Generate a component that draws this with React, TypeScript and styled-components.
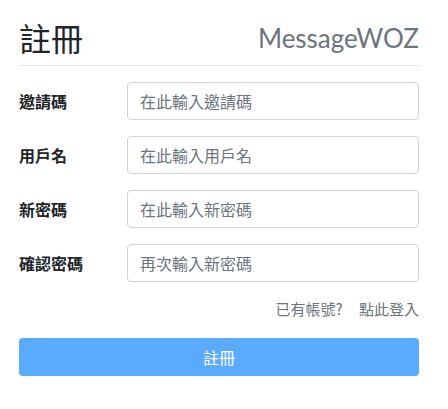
import React from "react";
import styled, { createGlobalStyle } from "styled-components";

const Global = createGlobalStyle`
  html, body { margin: 0; padding: 0; background: #fff; }
  body {
    font-family: Lato, "Noto Sans CJK TC", sans-serif;
    color: #212529;
  }
  * { box-sizing: border-box; }
`;

const Page = styled.div`
  width: 448px;
  padding: 10px 29px 0 19px;
`;

const Header = styled.div`
  display: flex;
  justify-content: space-between;
  align-items: center;
  height: 56px;
  border-bottom: 1px solid #e3e5e8;
  margin-bottom: 16px;
`;

const Title = styled.h1`
  margin: 0;
  font-size: 32px;
  font-weight: 400;
  line-height: 1.2;
  font-family: "Noto Sans CJK TC", sans-serif;
`;

const Brand = styled.div`
  font-family: Lato, sans-serif;
  font-size: 26px;
  color: #6c757d;
`;

const Form = styled.form`
  display: flex;
  flex-direction: column;
  gap: 16px;
`;

const Row = styled.div`
  display: grid;
  grid-template-columns: 108px 1fr;
  align-items: center;
`;

const Label = styled.label`
  font-size: 16px;
  font-weight: 700;
  font-family: "Noto Sans CJK TC", sans-serif;
`;

const Input = styled.input`
  height: 38px;
  width: 100%;
  border: 1px solid #ced4da;
  border-radius: 4px;
  padding: 0 12px;
  font-size: 16px;
  font-family: Lato, "Noto Sans CJK TC", sans-serif;
  color: #495057;
  &::placeholder { color: #6c757d; opacity: 1; }
`;

const LinkRow = styled.div`
  text-align: right;
  font-size: 15px;
  line-height: 22px;
  word-spacing: 13px;
  color: #6c757d;
  font-family: "Noto Sans CJK TC", sans-serif;
`;

const Button = styled.button`
  height: 38px;
  width: 100%;
  border: none;
  border-radius: 4px;
  background: #5aabff;
  color: #fff;
  font-size: 16px;
  font-family: "Noto Sans CJK TC", sans-serif;
  margin-top: 2px;
`;

const fields = [
  { label: "邀請碼", placeholder: "在此輸入邀請碼", type: "text" },
  { label: "用戶名", placeholder: "在此輸入用戶名", type: "text" },
  { label: "新密碼", placeholder: "在此輸入新密碼", type: "password" },
  { label: "確認密碼", placeholder: "再次輸入新密碼", type: "password" },
];

export default function App() {
  return (
    <>
      <Global />
      <Page>
        <Header>
          <Title>註冊</Title>
          <Brand>MessageWOZ</Brand>
        </Header>
        <Form onSubmit={(e) => e.preventDefault()}>
          {fields.map((f) => (
            <Row key={f.label}>
              <Label>{f.label}</Label>
              <Input type={f.type} placeholder={f.placeholder} />
            </Row>
          ))}
          <LinkRow>已有帳號? 點此登入</LinkRow>
          <Button type="submit">註冊</Button>
        </Form>
      </Page>
    </>
  );
}
